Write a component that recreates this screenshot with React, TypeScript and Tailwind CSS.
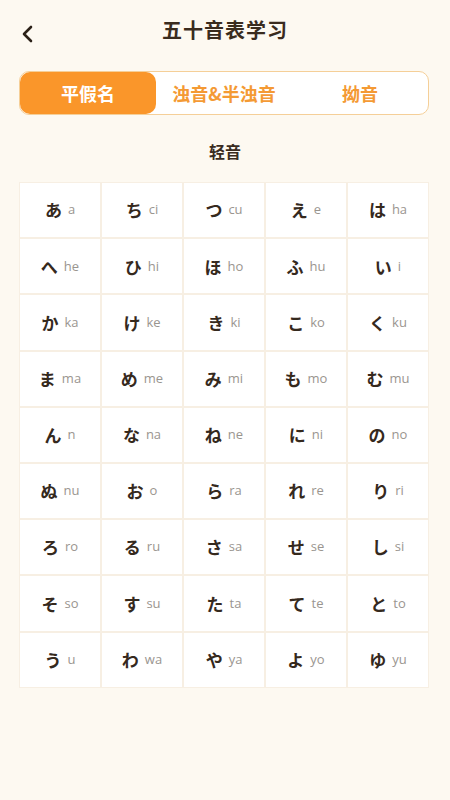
import React, { useState } from 'react';

const kana: [string, string][] = [
  ['あ', 'a'], ['ち', 'ci'], ['つ', 'cu'], ['え', 'e'], ['は', 'ha'],
  ['へ', 'he'], ['ひ', 'hi'], ['ほ', 'ho'], ['ふ', 'hu'], ['い', 'i'],
  ['か', 'ka'], ['け', 'ke'], ['き', 'ki'], ['こ', 'ko'], ['く', 'ku'],
  ['ま', 'ma'], ['め', 'me'], ['み', 'mi'], ['も', 'mo'], ['む', 'mu'],
  ['ん', 'n'], ['な', 'na'], ['ね', 'ne'], ['に', 'ni'], ['の', 'no'],
  ['ぬ', 'nu'], ['お', 'o'], ['ら', 'ra'], ['れ', 're'], ['り', 'ri'],
  ['ろ', 'ro'], ['る', 'ru'], ['さ', 'sa'], ['せ', 'se'], ['し', 'si'],
  ['そ', 'so'], ['す', 'su'], ['た', 'ta'], ['て', 'te'], ['と', 'to'],
  ['う', 'u'], ['わ', 'wa'], ['や', 'ya'], ['よ', 'yo'], ['ゆ', 'yu'],
];

const tabs = ['平假名', '浊音&半浊音', '拗音'];

const App: React.FC = () => {
  const [active, setActive] = useState(0);

  return (
    <div
      className="min-h-[800px] w-[450px] bg-[#fdf9f1] text-[#3a2c1e]"
      style={{ fontFamily: '"Noto Sans CJK SC", "Noto Sans", sans-serif' }}
    >
      {/* header */}
      <div className="relative flex h-[60px] items-center justify-center">
        <button className="absolute left-[16px] top-[20px] p-1">
          <svg width="16" height="20" viewBox="0 0 16 20" fill="none">
            <path d="M11 3 L4 10 L11 17" stroke="#2b2118" strokeWidth="2.6" strokeLinecap="round" strokeLinejoin="round" />
          </svg>
        </button>
        <h1 className="text-[20px] font-bold tracking-[1px]">五十音表学习</h1>
      </div>

      {/* tabs */}
      <div className="ml-[19px] mt-[11px] flex h-[44px] w-[410px] rounded-[10px] border border-[#f5cf98] bg-white">
        {tabs.map((t, i) => (
          <button
            key={t}
            onClick={() => setActive(i)}
            className={`flex flex-1 items-center justify-center rounded-[10px] text-[18px] font-bold ${
              active === i ? 'bg-[#fa962a] text-white' : 'text-[#f49a34]'
            }`}
          >
            {t}
          </button>
        ))}
      </div>

      <div className="mt-[24px] text-center text-[16px] font-bold">轻音</div>

      {/* kana grid */}
      <div className="ml-[19px] mt-[19px] grid w-[410px] grid-cols-5 gap-[2px] bg-[#f7efe3] p-[1px]">
        {kana.map(([k, r]) => (
          <div key={r} className="flex h-[54.2px] items-center justify-center gap-[6px] bg-white">
            <span className="text-[17px] font-bold text-[#35291d]">{k}</span>
            <span
              className="text-[13px] text-[#9a958f]"
              style={{ fontFamily: '"Open Sans", sans-serif' }}
            >
              {r}
            </span>
          </div>
        ))}
      </div>
    </div>
  );
};

export default App;
